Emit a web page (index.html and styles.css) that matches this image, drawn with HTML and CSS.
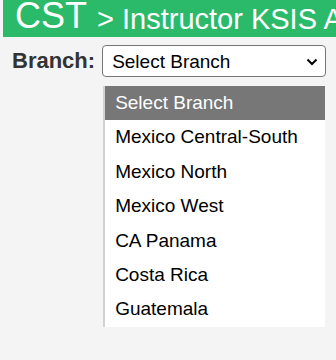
FILE: index.html
```html
<!DOCTYPE html>
<html lang="en">
<head>
  <meta charset="UTF-8">
  <title>CST - Instructor KSIS Admin</title>
  <link rel="stylesheet" href="styles.css">
</head>
<body>

  <div class="top-bar">
    <span class="brand">CST</span><span class="crumb">&gt; Instructor KSIS Admin</span>
  </div>

  <div class="branch-row">
    <label class="branch-label" for="branchSelect">Branch:</label>
    <div class="select-wrap">
      <select id="branchSelect" class="branch-select">
        <option value="">Select Branch</option>
        <option>Mexico Central-South</option>
        <option>Mexico North</option>
        <option>Mexico West</option>
        <option>CA Panama</option>
        <option>Costa Rica</option>
        <option>Guatemala</option>
      </select>
      <svg class="select-arrow" width="12" height="8" viewBox="0 0 12 8">
        <path d="M1.5 1.5 L6 6 L10.5 1.5" fill="none" stroke="#000" stroke-width="2"/>
      </svg>

      <!-- the open list of the select -->
      <ul class="branch-menu">
        <li class="active">Select Branch</li>
        <li>Mexico Central-South</li>
        <li>Mexico North</li>
        <li>Mexico West</li>
        <li>CA Panama</li>
        <li>Costa Rica</li>
        <li>Guatemala</li>
      </ul>
    </div>
  </div>

</body>
</html>
```

FILE: styles.css
```css
html {
  background-color: #f4f4f4;
}

body {
  margin: 0 0 0 3px;
  min-height: 360px;
  font-family: Arial, "Liberation Sans", sans-serif;
  background-color: #f4f4f4;
}

.top-bar {
  height: 37px;
  line-height: 32px;
  padding-left: 12px;
  background-color: #2bba6a;
  color: #fff;
  font-size: 36px;
  white-space: nowrap;
  overflow: hidden;
}

.crumb {
  font-size: 29px;
  margin-left: 10px;
  vertical-align: -1px;
}

.branch-row {
  display: flex;
  align-items: center;
  margin-top: 8px;
  padding-left: 9px;
}

.branch-label {
  font-size: 22px;
  font-weight: bold;
  color: #333;
  margin-right: 7px;
}

.select-wrap {
  position: relative;
}

.branch-select {
  display: block;
  width: 224px;
  height: 32px;
  padding: 0 9px;
  font-family: Arial, "Liberation Sans", sans-serif;
  font-size: 19px;
  color: #000;
  background-color: #fff;
  border: 1px solid #767676;
  border-radius: 4px;
  appearance: none;
  -webkit-appearance: none;
}

.select-arrow {
  position: absolute;
  top: 13px;
  right: 8px;
  pointer-events: none;
}

.branch-menu {
  position: absolute;
  top: 41px;
  left: 1px;
  z-index: 5;
  width: 220px;
  margin: 0;
  padding: 0;
  list-style: none;
  background-color: #fff;
  border-left: 2px solid #d2d2d2;
}

.branch-menu li {
  height: 34.4px;
  line-height: 34.4px;
  padding-left: 10px;
  font-size: 19px;
  color: #000;
}

.branch-menu li.active {
  background-color: #777;
  color: #fff;
}
```
